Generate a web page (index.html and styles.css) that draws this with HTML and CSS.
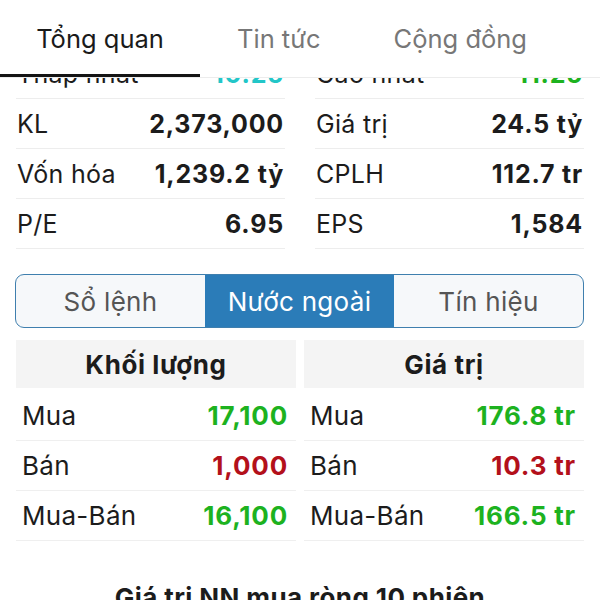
FILE: index.html
```html
<!DOCTYPE html>
<html lang="vi">
<head>
<meta charset="utf-8">
<title>Tổng quan</title>
<link rel="stylesheet" href="styles.css">
</head>
<body>
<header class="tabs">
  <div class="tab active">Tổng quan</div>
  <div class="tab">Tin tức</div>
  <div class="tab">Cộng đồng</div>
</header>
<main class="page">
  <section class="stats">
    <div class="col">
      <div class="row"><span class="label">Thấp nhất</span><span class="value teal">10.25</span></div>
      <div class="row"><span class="label">KL</span><span class="value">2,373,000</span></div>
      <div class="row"><span class="label">Vốn hóa</span><span class="value">1,239.2 tỷ</span></div>
      <div class="row"><span class="label">P/E</span><span class="value">6.95</span></div>
    </div>
    <div class="col">
      <div class="row"><span class="label">Cao nhất</span><span class="value green">11.25</span></div>
      <div class="row"><span class="label">Giá trị</span><span class="value">24.5 tỷ</span></div>
      <div class="row"><span class="label">CPLH</span><span class="value">112.7 tr</span></div>
      <div class="row"><span class="label">EPS</span><span class="value">1,584</span></div>
    </div>
  </section>

  <nav class="segment">
    <div class="seg">Sổ lệnh</div>
    <div class="seg selected">Nước ngoài</div>
    <div class="seg">Tín hiệu</div>
  </nav>

  <section class="foreign">
    <div class="table">
      <div class="thead">Khối lượng</div>
      <div class="trow"><span class="label">Mua</span><span class="value green">17,100</span></div>
      <div class="trow"><span class="label">Bán</span><span class="value red">1,000</span></div>
      <div class="trow"><span class="label">Mua-Bán</span><span class="value green">16,100</span></div>
    </div>
    <div class="table">
      <div class="thead">Giá trị</div>
      <div class="trow"><span class="label">Mua</span><span class="value green">176.8 tr</span></div>
      <div class="trow"><span class="label">Bán</span><span class="value red">10.3 tr</span></div>
      <div class="trow"><span class="label">Mua-Bán</span><span class="value green">166.5 tr</span></div>
    </div>
  </section>

  <h2 class="title">Giá trị NN mua ròng 10 phiên</h2>
</main>
</body>
</html>
```
FILE: styles.css
```css
html, body {
  margin: 0;
  padding: 0;
  background: #ffffff;
}
body {
  font-family: Inter, "Liberation Sans", Arial, sans-serif;
  font-size: 25px;
  color: #1c1c1c;
  overflow: hidden;
  height: 600px;
}

.tabs {
  position: fixed;
  top: 0;
  left: 0;
  right: 0;
  height: 77px;
  background: #ffffff;
  border-bottom: 1px solid #ececec;
  display: flex;
  z-index: 10;
}
.tab {
  box-sizing: border-box;
  height: 77px;
  padding: 3px 36px 0 37px;
  display: flex;
  align-items: center;
  color: #777777;
  font-size: 25.5px;
  border-bottom: 3px solid transparent;
}
.tab.active {
  color: #1a1a1a;
  border-bottom-color: #141414;
  width: 200px;
  justify-content: center;
  padding: 3px 0 0;
}

.page {
  padding-top: 49px;
}

.stats {
  display: grid;
  grid-template-columns: 1fr 1fr;
  column-gap: 30px;
  padding: 0 16px;
}
.row {
  box-sizing: border-box;
  height: 50px;
  border-bottom: 1px solid #ededed;
  display: flex;
  justify-content: space-between;
  align-items: center;
  padding: 0 1px;
}
.label {
  font-weight: 400;
  color: #1c1c1c;
  letter-spacing: 0.3px;
}
.value {
  font-weight: 700;
  color: #1c1c1c;
  letter-spacing: 0.8px;
}
.teal { color: #22c6c8; }
.green { color: #1db21f; }
.red { color: #b3101b; }

.segment {
  margin: 25px 16px 0 15px;
  height: 54px;
  box-sizing: border-box;
  border: 1.5px solid #3f7fae;
  border-radius: 9px;
  overflow: hidden;
  display: flex;
  background: #f6f8fa;
  font-size: 26px;
}
.seg {
  flex: 1;
  display: flex;
  align-items: center;
  justify-content: center;
  color: #555555;
  letter-spacing: 0.3px;
}
.seg.selected {
  background: #2b7cb8;
  color: #ffffff;
}

.foreign {
  display: grid;
  grid-template-columns: 1fr 1fr;
  column-gap: 8px;
  padding: 0 16px;
  margin-top: 12px;
  font-size: 26px;
}
.thead {
  height: 48px;
  background: #f4f4f4;
  display: flex;
  align-items: center;
  justify-content: center;
  font-weight: 700;
  color: #1c1c1c;
  margin-bottom: 3px;
  letter-spacing: 0.6px;
}
.trow {
  box-sizing: border-box;
  height: 50px;
  border-bottom: 1px solid #efefef;
  display: flex;
  justify-content: space-between;
  align-items: center;
  padding: 0 8px 0 6px;
}

.title {
  margin: 42px 0 0;
  text-align: center;
  font-size: 26px;
  font-weight: 700;
  line-height: 30px;
  color: #1c1c1c;
  letter-spacing: 0.4px;
}
```
